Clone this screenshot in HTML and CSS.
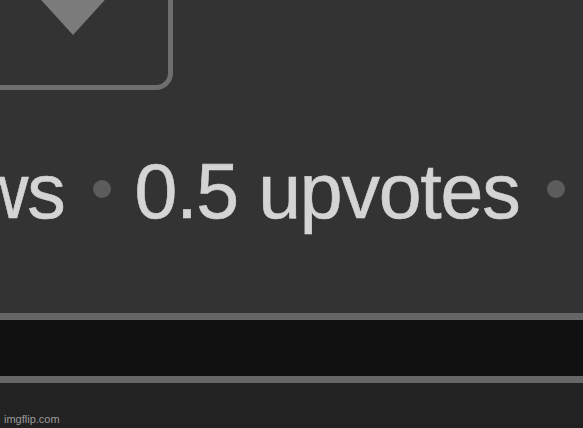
FILE: index.html
```html
<!DOCTYPE html>
<html lang="en">
<head>
<meta charset="UTF-8">
<meta name="viewport" content="width=device-width, initial-scale=1.0">
<title>imgflip stats</title>
<link rel="stylesheet" href="styles.css">
</head>
<body>
<div class="stats">
  <div class="vote-box">
    <svg class="arrow" width="100" height="55" viewBox="0 0 100 55">
      <polygon points="0,0 100,0 50,55" fill="#7b7b7b"/>
    </svg>
  </div>
  <div class="meta">
    <span class="views">views</span>
    <span class="dot"></span>
    <span>0.5 upvotes</span>
    <span class="dot"></span>
  </div>
</div>
<div class="bar"></div>
<div class="footer">imgflip.com</div>
</body>
</html>
```

FILE: styles.css
```css
html, body {
  margin: 0;
  height: 428px;
  overflow: hidden;
  background-color: #222;
  font-family: "Liberation Sans", Arial, sans-serif;
}

.stats {
  height: 313px;
  background-color: #333;
  overflow: hidden;
}

.vote-box {
  box-sizing: border-box;
  width: 200px;
  height: 150px;
  margin: -60px 0 0 -27px;
  border: 5px solid #6e6e6e;
  border-radius: 17px;
  display: flex;
  justify-content: center;
}

.arrow {
  display: block;
  margin-top: 35px;
}

.meta {
  display: flex;
  align-items: center;
  gap: 24px;
  height: 77px;
  margin: 63px 0 0 -122px;
  font-size: 77px;
  line-height: 1;
  letter-spacing: -1.2px;
  color: #d4d4d4;
  -webkit-text-stroke: 0.6px #d4d4d4;
  white-space: nowrap;
}

.dot {
  flex: none;
  width: 18px;
  height: 18px;
  margin: 0 0 6px 4px;
  border-radius: 50%;
  background-color: #5c5c5c;
}

.bar {
  height: 56px;
  background-color: #111;
  border-top: 7px solid #666;
  border-bottom: 7px solid #666;
}

.footer {
  box-sizing: border-box;
  height: 45px;
  padding: 30px 0 0 4px;
  font-size: 11px;
  line-height: 13px;
  color: #9a9a9a;
}
```
